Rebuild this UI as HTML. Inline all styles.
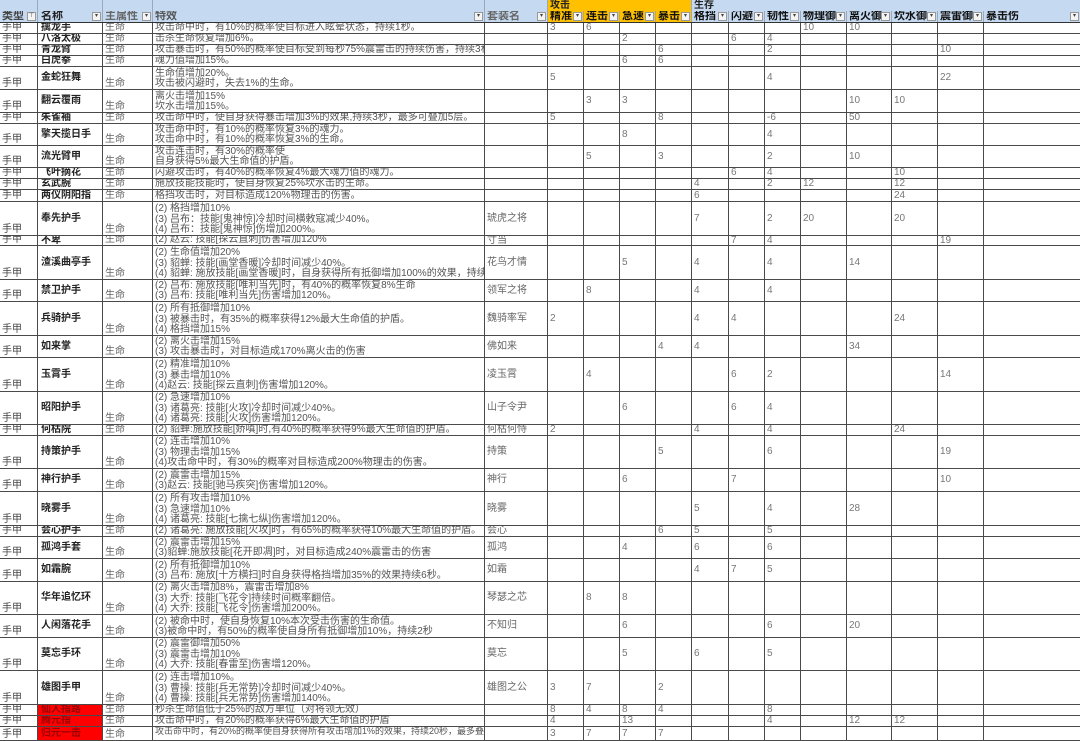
<!DOCTYPE html>
<html><head><meta charset="utf-8"><style>
*{margin:0;padding:0;box-sizing:border-box}
s,u{text-decoration:none!important}
body{width:1080px;height:739px;overflow:hidden;background:#fff;font-family:"Liberation Sans","WenQuanYi Zen Hei","Noto Sans CJK SC",sans-serif;font-size:10px;line-height:10px;color:#555}
.r{display:flex;border-bottom:1px solid #4a4a4a;width:1080px}
.r>*{display:flex;flex-direction:column;justify-content:center;border-right:1px solid #4a4a4a;overflow:hidden;white-space:nowrap;padding-left:2px;flex:none;font-weight:normal;font-style:normal;line-height:10px}
.r>*:nth-child(1){width:38px;justify-content:flex-end;color:#444}
.r>*:nth-child(2){width:65px;font-weight:bold;color:#222;padding-left:3px}
.r>*:nth-child(3){width:50px;justify-content:flex-end;color:#666}
.r>*:nth-child(4){width:332px;justify-content:flex-end;color:#555}
.r>*:nth-child(5){width:63px;color:#666}
.r>*:nth-child(6),.r>*:nth-child(7),.r>*:nth-child(8),.r>*:nth-child(9){width:36px}
.r>*:nth-child(10){width:37px}
.r>*:nth-child(11),.r>*:nth-child(12){width:36px}
.r>*:nth-child(13){width:46px}
.r>*:nth-child(14){width:45px}
.r>*:nth-child(15),.r>*:nth-child(16){width:46px}
.r>*:nth-child(17){width:96px;border-right:none}
.r>*{color:#777}
.r>*:nth-child(1){color:#444}.r>*:nth-child(2){color:#222}
.r>*:nth-child(4){color:#555}
.r>* span{display:block;height:11px;line-height:11px;flex:none}
.r>* span:last-child{height:10px;line-height:10px}
.h1{height:11px;background:#c5d9f1;border-bottom:none}
.h1>*{border-right:1px solid #9aaabb;color:#222;font-weight:bold}
.h2{height:12px;background:#c5d9f1;border-bottom:1px solid #333}
.h2>*{color:#111;font-weight:bold;font-size:11px;justify-content:flex-end;position:relative;border-right:1px solid #9aaabb;line-height:11px}
.o{background:#ffc000!important}
.dd{position:absolute;right:1px;bottom:1px;width:9px;height:9px;border:1px solid #999;background:#f4f4f4;font-size:6px;line-height:7px;text-align:center;color:#444;font-weight:normal;font-style:normal}
.red{background:#f00;color:#900!important}
</style></head><body>
<div class="r h1"><span></span><span></span><span></span><span></span><span></span><span class="o" style="width:144px">攻击</span><span style="width:392px;border-right:none">生存</span></div>
<div class="r h2"><span>类型<i class="dd">⊤</i></span><span>名称<i class="dd">▾</i></span><span>主属性<i class="dd">▾</i></span><span>特效<i class="dd">▾</i></span><span>套装名<i class="dd">▾</i></span><span class="o">精准<i class="dd">▾</i></span><span class="o">连击<i class="dd">▾</i></span><span class="o">急速<i class="dd">▾</i></span><span class="o">暴击<i class="dd">▾</i></span><span>格挡<i class="dd">▾</i></span><span>闪避<i class="dd">▾</i></span><span>韧性<i class="dd">▾</i></span><span>物理御<i class="dd">▾</i></span><span>离火御<i class="dd">▾</i></span><span>坎水御<i class="dd">▾</i></span><span>震雷御<i class="dd">▾</i></span><span>暴击伤<i class="dd">▾</i></span></div>

<div class="r" style="height:11px"><s>手甲</s><b>擒龙手</b><s>生命</s><s>攻击命中时，有10%的概率使目标进入眩晕状态，持续1秒。</s><s></s><s>3</s><s>6</s><s></s><s></s><s></s><s></s><s></s><s>10</s><s>10</s><s></s><s></s><s></s></div>
<div class="r" style="height:11px"><s>手甲</s><b>八洛太极</b><s>生命</s><s>击杀生命恢复增加6%。</s><s></s><s></s><s></s><s>2</s><s></s><s></s><s>6</s><s>4</s><s></s><s></s><s></s><s></s><s></s></div>
<div class="r" style="height:11px"><s>手甲</s><b>青龙臂</b><s>生命</s><s>攻击暴击时，有50%的概率使目标受到每秒75%震雷击的持续伤害，持续3秒。</s><s></s><s></s><s></s><s></s><s>6</s><s></s><s></s><s>2</s><s></s><s></s><s></s><s>10</s><s></s></div>
<div class="r" style="height:11px"><s>手甲</s><b>白虎拳</b><s>生命</s><s>魂力值增加15%。</s><s></s><s></s><s></s><s>6</s><s>6</s><s></s><s></s><s></s><s></s><s></s><s></s><s></s><s></s></div>
<div class="r" style="height:23px"><s>手甲</s><b>金蛇狂舞</b><s>生命</s><s><span>生命值增加20%。</span><span>攻击被闪避时，失去1%的生命。</span></s><s></s><s>5</s><s></s><s></s><s></s><s></s><s></s><s>4</s><s></s><s></s><s></s><s>22</s><s></s></div>
<div class="r" style="height:23px"><s>手甲</s><b>翻云覆雨</b><s>生命</s><s><span>离火击增加15%</span><span>坎水击增加15%。</span></s><s></s><s></s><s>3</s><s>3</s><s></s><s></s><s></s><s></s><s></s><s>10</s><s>10</s><s></s><s></s></div>
<div class="r" style="height:11px"><s>手甲</s><b>朱雀袖</b><s>生命</s><s>攻击命中时，使自身获得暴击增加3%的效果,持续3秒，最多可叠加5层。</s><s></s><s>5</s><s></s><s></s><s>8</s><s></s><s></s><s>-6</s><s></s><s>50</s><s></s><s></s><s></s></div>
<div class="r" style="height:22px"><s>手甲</s><b>擎天揽日手</b><s>生命</s><s><span>攻击命中时，有10%的概率恢复3%的魂力。</span><span>攻击命中时，有10%的概率恢复3%的生命。</span></s><s></s><s></s><s></s><s>8</s><s></s><s></s><s></s><s>4</s><s></s><s></s><s></s><s></s><s></s></div>
<div class="r" style="height:22px"><s>手甲</s><b>流光臂甲</b><s>生命</s><s><span>攻击连击时，有30%的概率使</span><span>自身获得5%最大生命值的护盾。</span></s><s></s><s></s><s>5</s><s></s><s>3</s><s></s><s></s><s>2</s><s></s><s>10</s><s></s><s></s><s></s></div>
<div class="r" style="height:11px"><s>手甲</s><b>飞叶摘花</b><s>生命</s><s>闪避攻击时，有40%的概率恢复4%最大魂力值的魂力。</s><s></s><s></s><s></s><s></s><s></s><s></s><s>6</s><s>4</s><s></s><s></s><s>10</s><s></s><s></s></div>
<div class="r" style="height:11px"><s>手甲</s><b>玄武腕</b><s>生命</s><s>施放技能技能时，使自身恢复25%坎水击的生命。</s><s></s><s></s><s></s><s></s><s></s><s>4</s><s></s><s>2</s><s>12</s><s></s><s>12</s><s></s><s></s></div>
<div class="r" style="height:12px"><s>手甲</s><b>两仪阴阳指</b><s>生命</s><s>格挡攻击时，对目标造成120%物理击的伤害。</s><s></s><s></s><s></s><s></s><s></s><s>6</s><s></s><s></s><s></s><s></s><s>24</s><s></s><s></s></div>
<div class="r" style="height:34px"><s>手甲</s><b>奉先护手</b><s>生命</s><s><span>(2) 格挡增加10%</span><span>(3) 吕布：技能[鬼神惊]冷却时间横敕寇减少40%。</span><span>(4) 吕布：技能[鬼神惊]伤增加200%。</span></s><s>琥虎之将</s><s></s><s></s><s></s><s></s><s>7</s><s></s><s>2</s><s>20</s><s></s><s>20</s><s></s><s></s></div>
<div class="r" style="height:10px"><s>手甲</s><b>不卑</b><s>生命</s><s>(2) 赵云: 技能[探云直刺]伤害增加120%</s><s>寸当</s><s></s><s></s><s></s><s></s><s></s><s>7</s><s>4</s><s></s><s></s><s></s><s>19</s><s></s></div>
<div class="r" style="height:34px"><s>手甲</s><b>渣溪曲亭手</b><s>生命</s><s><span>(2) 生命值增加20%</span><span>(3) 貂蝉: 技能[画堂香暖]冷却时间减少40%。</span><span>(4) 貂蝉: 施放技能[画堂香暖]时，自身获得所有抵御增加100%的效果，持续6秒。</span></s><s>花鸟才情</s><s></s><s></s><s>5</s><s></s><s>4</s><s></s><s>4</s><s></s><s>14</s><s></s><s></s><s></s></div>
<div class="r" style="height:22px"><s>手甲</s><b>禁卫护手</b><s>生命</s><s><span>(2) 吕布: 施放技能[唯利当先]时，有40%的概率恢复8%生命</span><span>(3) 吕布: 技能[唯利当先]伤害增加120%。</span></s><s>领军之将</s><s></s><s>8</s><s></s><s></s><s>4</s><s></s><s>4</s><s></s><s></s><s></s><s></s><s></s></div>
<div class="r" style="height:34px"><s>手甲</s><b>兵骑护手</b><s>生命</s><s><span>(2) 所有抵御增加10%</span><span>(3) 被暴击时，有35%的概率获得12%最大生命值的护盾。</span><span>(4) 格挡增加15%</span></s><s>魏骑率军</s><s>2</s><s></s><s></s><s></s><s>4</s><s>4</s><s></s><s></s><s></s><s>24</s><s></s><s></s></div>
<div class="r" style="height:22px"><s>手甲</s><b>如来掌</b><s>生命</s><s><span>(2) 离火击增加15%</span><span>(3) 攻击暴击时，对目标造成170%离火击的伤害</span></s><s>佛如来</s><s></s><s></s><s></s><s>4</s><s>4</s><s></s><s></s><s></s><s>34</s><s></s><s></s><s></s></div>
<div class="r" style="height:34px"><s>手甲</s><b>玉霄手</b><s>生命</s><s><span>(2) 精准增加10%</span><span>(3) 暴击增加10%</span><span>(4)赵云: 技能[探云直刺]伤害增加120%。</span></s><s>凌玉霄</s><s></s><s>4</s><s></s><s></s><s></s><s>6</s><s>2</s><s></s><s></s><s></s><s>14</s><s></s></div>
<div class="r" style="height:33px"><s>手甲</s><b>昭阳护手</b><s>生命</s><s><span>(2) 急速增加10%</span><span>(3) 诸葛亮: 技能[火攻]冷却时间减少40%。</span><span>(4) 诸葛亮: 技能[火攻]伤害增加120%。</span></s><s>山子令尹</s><s></s><s></s><s>6</s><s></s><s></s><s>6</s><s>4</s><s></s><s></s><s></s><s></s><s></s></div>
<div class="r" style="height:11px"><s>手甲</s><b>何枯院</b><s>生命</s><s>(2) 貂蝉:施放技能[娇嗔]时,有40%的概率获得9%最大生命值的护盾。</s><s>何枯何恃</s><s>2</s><s></s><s></s><s></s><s>4</s><s></s><s>4</s><s></s><s></s><s>24</s><s></s><s></s></div>
<div class="r" style="height:33px"><s>手甲</s><b>持策护手</b><s>生命</s><s><span>(2) 连击增加10%</span><span>(3) 物理击增加15%</span><span>(4)攻击命中时，有30%的概率对目标造成200%物理击的伤害。</span></s><s>持策</s><s></s><s></s><s></s><s>5</s><s></s><s></s><s>6</s><s></s><s></s><s></s><s>19</s><s></s></div>
<div class="r" style="height:23px"><s>手甲</s><b>神行护手</b><s>生命</s><s><span>(2) 震雷击增加15%</span><span>(3)赵云: 技能[驰马疾突]伤害增加120%。</span></s><s>神行</s><s></s><s></s><s>6</s><s></s><s></s><s>7</s><s></s><s></s><s></s><s></s><s>10</s><s></s></div>
<div class="r" style="height:34px"><s>手甲</s><b>晓雾手</b><s>生命</s><s><span>(2) 所有攻击增加10%</span><span>(3) 急速增加10%</span><span>(4) 诸葛亮: 技能[七擒七纵]伤害增加120%。</span></s><s>晓雾</s><s></s><s></s><s></s><s></s><s>5</s><s></s><s>4</s><s></s><s>28</s><s></s><s></s><s></s></div>
<div class="r" style="height:11px"><s>手甲</s><b>会心护手</b><s>生命</s><s>(2) 诸葛亮: 施放技能[火攻]时，有65%的概率获得10%最大生命值的护盾。</s><s>会心</s><s></s><s></s><s></s><s>6</s><s>5</s><s></s><s>5</s><s></s><s></s><s></s><s></s><s></s></div>
<div class="r" style="height:22px"><s>手甲</s><b>孤鸿手套</b><s>生命</s><s><span>(2) 震雷击增加15%</span><span>(3)貂蝉:施放技能[花开即凋]时，对目标造成240%震雷击的伤害</span></s><s>孤鸿</s><s></s><s></s><s>4</s><s></s><s>6</s><s></s><s>6</s><s></s><s></s><s></s><s></s><s></s></div>
<div class="r" style="height:23px"><s>手甲</s><b>如霜腕</b><s>生命</s><s><span>(2) 所有抵御增加10%</span><span>(3) 吕布: 施放[十方横扫]时自身获得格挡增加35%的效果持续6秒。</span></s><s>如霜</s><s></s><s></s><s></s><s></s><s>4</s><s>7</s><s>5</s><s></s><s></s><s></s><s></s><s></s></div>
<div class="r" style="height:33px"><s>手甲</s><b>华年追忆环</b><s>生命</s><s><span>(2) 离火击增加8%，震雷击增加8%</span><span>(3) 大乔: 技能[飞花令]持续时间概率翻倍。</span><span>(4) 大乔: 技能[飞花令]伤害增加200%。</span></s><s>琴瑟之芯</s><s></s><s>8</s><s>8</s><s></s><s></s><s></s><s></s><s></s><s></s><s></s><s></s><s></s></div>
<div class="r" style="height:23px"><s>手甲</s><b>人闲落花手</b><s>生命</s><s><span>(2) 被命中时，使自身恢复10%本次受击伤害的生命值。</span><span>(3)被命中时，有50%的概率使自身所有抵御增加10%，持续2秒</span></s><s>不知归</s><s></s><s></s><s>6</s><s></s><s></s><s></s><s>6</s><s></s><s>20</s><s></s><s></s><s></s></div>
<div class="r" style="height:33px"><s>手甲</s><b>莫忘手环</b><s>生命</s><s><span>(2) 震雷御增加50%</span><span>(3) 震雷击增加10%</span><span>(4) 大乔: 技能[春雷至]伤害增120%。</span></s><s>莫忘</s><s></s><s></s><s>5</s><s></s><s>6</s><s></s><s>5</s><s></s><s></s><s></s><s></s><s></s></div>
<div class="r" style="height:34px"><s>手甲</s><b>雄图手甲</b><s>生命</s><s><span>(2) 连击增加10%。</span><span>(3) 曹操: 技能[兵无常势]冷却时间减少40%。</span><span>(4) 曹操: 技能[兵无常势]伤害增加140%。</span></s><s>雄图之公</s><s>3</s><s>7</s><s></s><s>2</s><s></s><s></s><s></s><s></s><s></s><s></s><s></s><s></s></div>
<div class="r" style="height:11px"><s>手甲</s><b class="red">仙人指路</b><s>生命</s><s>秒杀生命值低于25%的敌方单位（对将领无效）</s><s></s><s>8</s><s>4</s><s>8</s><s>4</s><s></s><s></s><s>8</s><s></s><s></s><s></s><s></s><s></s></div>
<div class="r" style="height:11px"><s>手甲</s><b class="red">腾元指</b><s>生命</s><s>攻击命中时，有20%的概率获得6%最大生命值的护盾</s><s></s><s>4</s><s></s><s>13</s><s></s><s></s><s></s><s>4</s><s></s><s>12</s><s>12</s><s></s><s></s></div>
<div class="r" style="height:14px"><s>手甲</s><b class="red">归元一击</b><s>生命</s><s style="justify-content:flex-start;font-size:9px;line-height:9px">攻击命中时，有20%的概率使自身获得所有攻击增加1%的效果，持续20秒，最多叠加50层</s><s></s><s>3</s><s>7</s><s>7</s><s>7</s><s></s><s></s><s></s><s></s><s></s><s></s><s></s><s></s></div>
</body></html>
